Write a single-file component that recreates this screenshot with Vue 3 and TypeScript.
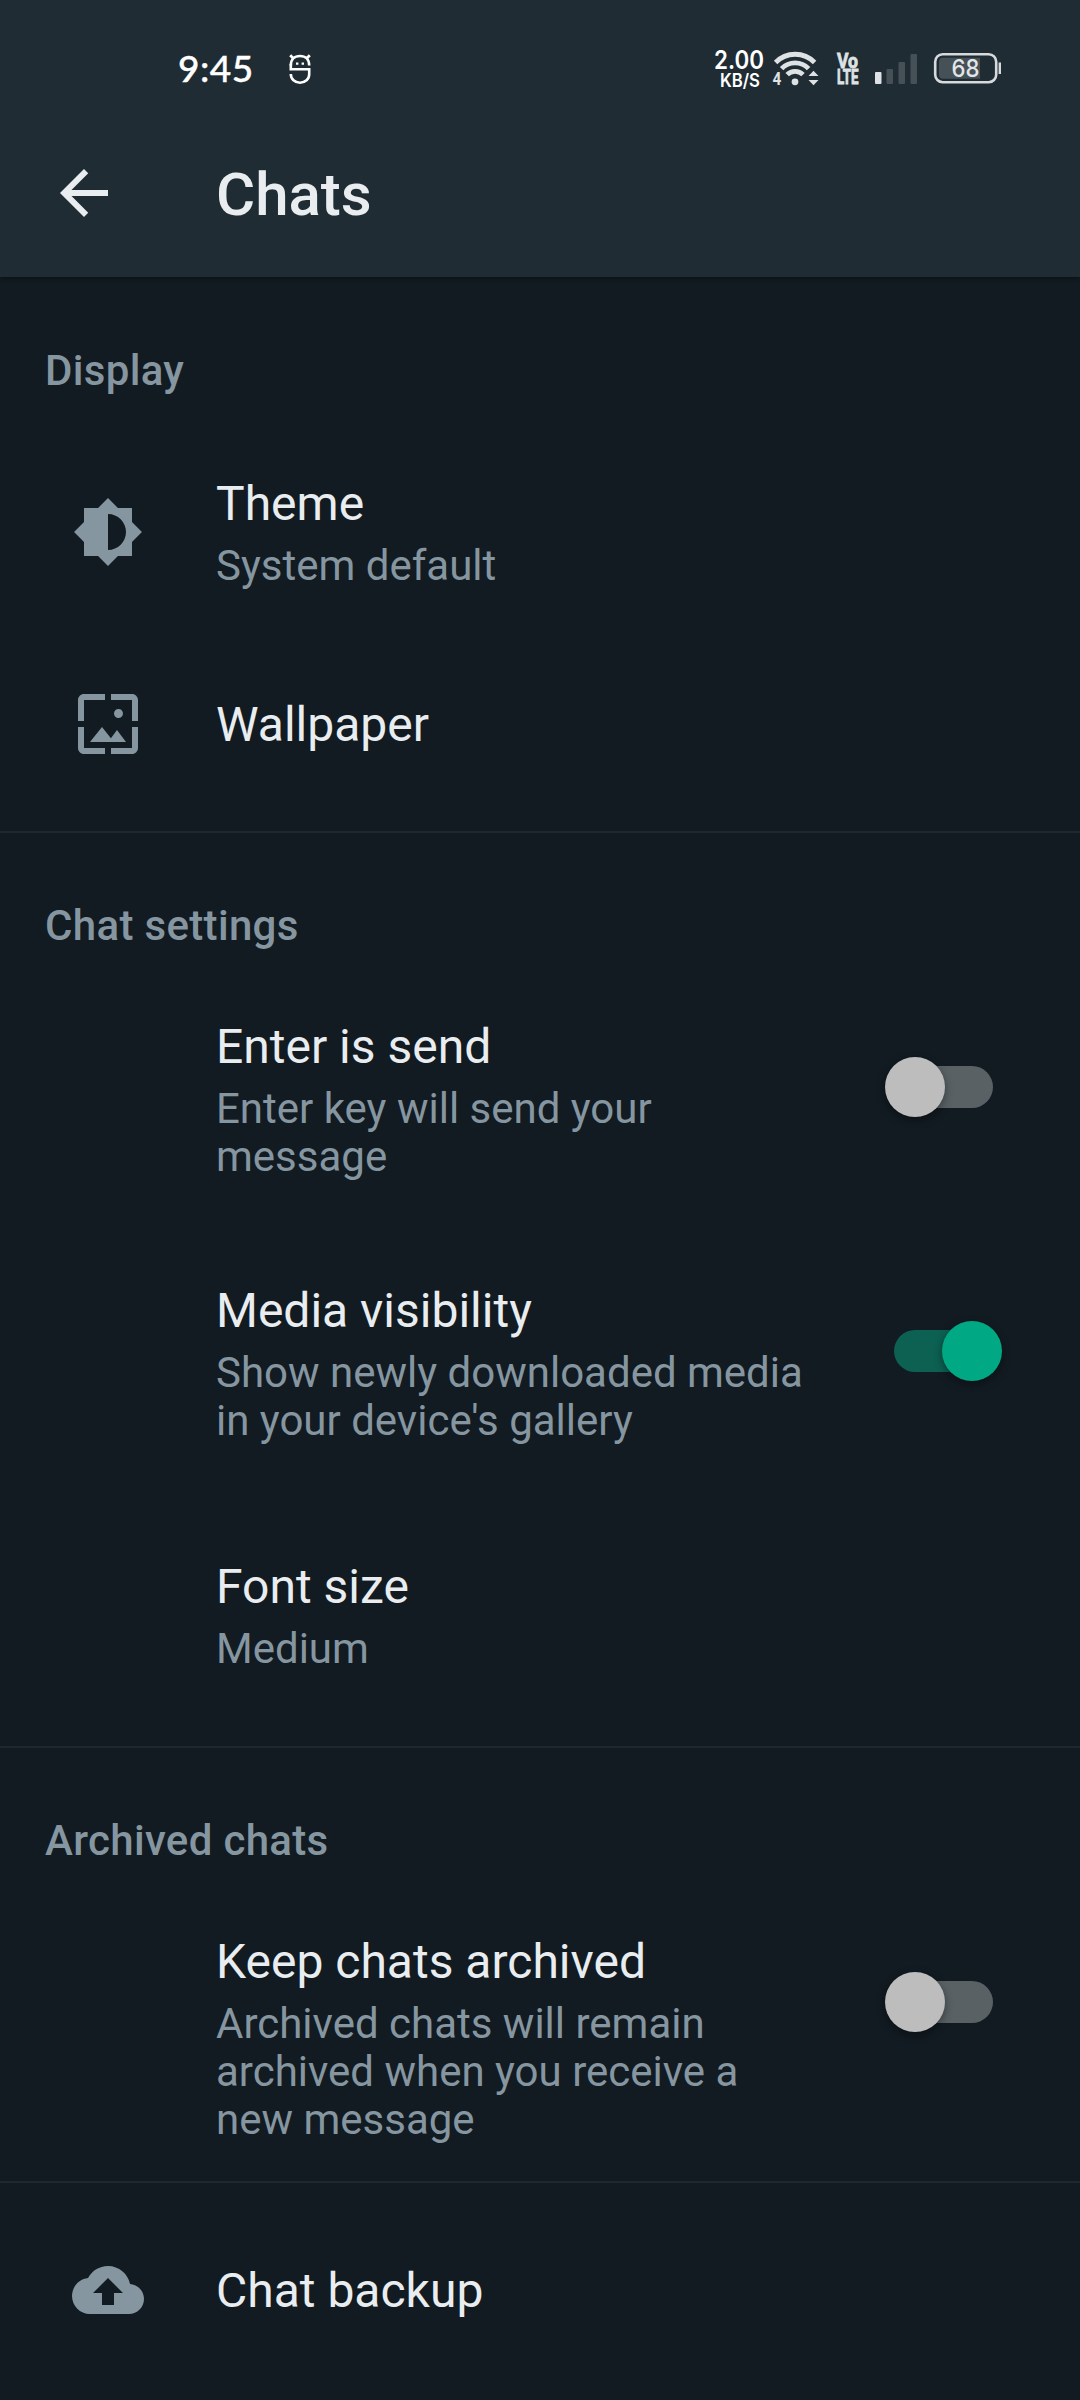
<script setup lang="ts">
interface Item {
  title: string
  subtitle?: string
  icon?: string
  toggle?: boolean
  height: number
}
interface Section {
  heading?: string
  items: Item[]
  bottom: number
}

const icons: Record<string, string> = {
  theme:
    'M20 15.31L23.31 12 20 8.69V4h-4.69L12 .69 8.69 4H4v4.69L.69 12 4 15.31V20h4.69L12 23.31 15.31 20H20v-4.69zM12 18V6c3.31 0 6 2.69 6 6s-2.69 6-6 6z',
  wallpaper:
    'M4 4h7V2H4c-1.1 0-2 .9-2 2v7h2V4zm6 9l-4 5h12l-3-4-2.03 2.71L10 13zm7-4.5c0-.83-.67-1.5-1.5-1.5S14 7.67 14 8.5s.67 1.5 1.5 1.5S17 9.33 17 8.5zM20 2h-7v2h7v7h2V4c0-1.1-.9-2-2-2zm0 18h-7v2h7c1.1 0 2-.9 2-2v-7h-2v7zM4 13H2v7c0 1.1.9 2 2 2h7v-2H4v-7z',
  backup:
    'M19.35 10.04C18.67 6.59 15.64 4 12 4 9.11 4 6.6 5.64 5.35 8.04 2.34 8.36 0 10.91 0 14c0 3.31 2.69 6 6 6h13c2.76 0 5-2.24 5-5 0-2.64-2.05-4.78-4.65-4.96zM14 13v4h-4v-4H7l5-5 5 5h-3z',
}

const sections: Section[] = [
  {
    heading: 'Display',
    items: [
      { title: 'Theme', subtitle: 'System default', icon: 'theme', height: 216 },
      { title: 'Wallpaper', icon: 'wallpaper', height: 168 },
    ],
    bottom: 22,
  },
  {
    heading: 'Chat settings',
    items: [
      { title: 'Enter is send', subtitle: 'Enter key will send your message', toggle: false, height: 264 },
      { title: 'Media visibility', subtitle: "Show newly downloaded media in your device's gallery", toggle: true, height: 265 },
      { title: 'Font size', subtitle: 'Medium', height: 216 },
    ],
    bottom: 22,
  },
  {
    heading: 'Archived chats',
    items: [
      {
        title: 'Keep chats archived',
        subtitle: 'Archived chats will remain archived when you receive a new message',
        toggle: false,
        height: 287,
      },
    ],
    bottom: 0,
  },
  { items: [{ title: 'Chat backup', icon: 'backup', height: 216 }], bottom: 0 },
]
</script>

<template>
  <div class="screen">
    <header class="top">
      <div class="status">
        <span class="clock">9:45</span>
        <svg class="mascot" width="24" height="32" viewBox="0 0 24 32" fill="none" stroke="#fff" stroke-width="2.6">
          <path d="M2.8 12.5C2.8 6.5 6.5 3 12 3s9.2 3.5 9.2 9.5" />
          <path d="M2.2 2.2l3.3 3.4M21.8 2.2l-3.3 3.4" stroke-width="2.8" />
          <path d="M2.8 11v5.2h18.4v5c0 5-4 8.5-9.2 8.5s-9.2-3.5-9.2-8.7" />
          <path d="M8 10.6h2.4M13.6 10.6H16" stroke-width="2.4" />
        </svg>
        <div class="cluster">
          <svg width="56" height="42" viewBox="0 0 56 42" fill="#fff">
            <text class="speed" x="3" y="21" font-size="25" textLength="50" lengthAdjust="spacingAndGlyphs">2.00</text>
            <text class="speed" x="9" y="38.5" font-size="18.5" textLength="40" lengthAdjust="spacingAndGlyphs">KB/S</text>
          </svg>
          <svg class="wifi" width="52" height="42" viewBox="0 0 52 42" fill="#dfe2e4">
            <g fill="none" stroke="#dfe2e4" stroke-width="4.8">
              <path d="M6.6 14.5a27.2 27.2 0 0 1 39 0" />
              <path d="M12.6 20.7a18.6 18.6 0 0 1 27 0" />
              <path d="M18.2 26.7a11 11 0 0 1 15.8 0" />
            </g>
            <circle cx="26" cy="33.8" r="3.4" />
            <text class="label" x="3.4" y="36.5" font-size="18" textLength="8.8" lengthAdjust="spacingAndGlyphs">4</text>
            <path d="M39.5 28l5-5.2 5 5.2zM39.5 32l5 5.2 5-5.2z" />
          </svg>
          <svg class="volte" width="24" height="42" viewBox="0 0 24 42" fill="#dfe2e4" stroke="#dfe2e4" stroke-width="0.8">
            <text class="label" x="1" y="20" font-size="19.5" textLength="21" lengthAdjust="spacingAndGlyphs">Vo</text>
            <text class="label" x="1" y="36" font-size="19.5" textLength="21.5" lengthAdjust="spacingAndGlyphs">LTE</text>
          </svg>
          <svg class="signal" width="44" height="42" viewBox="0 0 44 42" fill="#465057">
            <rect x="1" y="24" width="6.5" height="12" rx="1" fill="#dfe2e4" />
            <rect x="12.5" y="21" width="6.5" height="15" rx="1" />
            <rect x="24.5" y="14" width="6.5" height="22" rx="1" />
            <rect x="36.5" y="6" width="6.5" height="30" rx="1" />
          </svg>
          <svg class="battery" width="70" height="42" viewBox="0 0 70 42">
            <rect x="2.2" y="6.2" width="61" height="28" rx="7.5" fill="none" stroke="#d6dadc" stroke-width="2.6" />
            <path d="M10 9.7h37v21H10a4 4 0 0 1-4-4v-13a4 4 0 0 1 4-4z" fill="#465057" />
            <path d="M66.8 14.5v11.5" stroke="#d6dadc" stroke-width="2.4" />
            <text class="percent" x="18.5" y="29.2" font-size="24" textLength="28" lengthAdjust="spacingAndGlyphs" fill="#e3e6e8">68</text>
          </svg>
        </div>
      </div>
      <div class="bar">
        <svg class="back" width="72" height="72" viewBox="0 0 24 24" fill="#e9edef">
          <path d="M20 11H7.83l5.59-5.59L12 4l-8 8 8 8 1.41-1.41L7.83 13H20v-2z" />
        </svg>
        <h1>Chats</h1>
      </div>
    </header>

    <main>
      <section v-for="(s, i) in sections" :key="i" :style="{ paddingBottom: s.bottom + 'px' }">
        <h2 v-if="s.heading">{{ s.heading }}</h2>
        <div
          v-for="item in s.items"
          :key="item.title"
          class="row"
          :class="{ toggled: item.toggle !== undefined }"
          :style="{ height: item.height + 'px' }"
        >
          <div class="lead">
            <svg v-if="item.icon" width="72" height="72" viewBox="0 0 24 24" fill="#8696a0">
              <path :d="icons[item.icon]" />
            </svg>
          </div>
          <div class="text">
            <div class="title">{{ item.title }}</div>
            <div v-if="item.subtitle" class="subtitle">{{ item.subtitle }}</div>
          </div>
          <div v-if="item.toggle !== undefined" class="switch" :class="{ on: item.toggle }">
            <span class="thumb"></span>
          </div>
        </div>
      </section>
    </main>
  </div>
</template>

<style>
body {
  background: #121b22;
}
</style>

<style scoped>
.screen {
  width: 1080px;
  height: 2400px;
  overflow: hidden;
  background: #121b22;
  font-family: Roboto, sans-serif;
  color: #e9edef;
}
.top {
  position: relative;
  height: 277px;
  background: #1f2c34;
  box-shadow: 0 1px 4px rgba(0, 0, 0, 0.45);
}
.status {
  display: flex;
  height: 137px;
  padding: 0 77px 0 178px;
}
.clock {
  width: 110px;
  padding-top: 46px;
  font: 500 37px/44px Lato, sans-serif;
  letter-spacing: 0.5px;
  color: #fff;
  -webkit-text-stroke: 0.4px #fff;
}
.mascot {
  margin-top: 53px;
}
.cluster {
  display: flex;
  margin: 48px 0 0 auto;
}
.cluster svg {
  overflow: visible;
}
.wifi {
  margin-left: 1.5px;
}
.volte {
  margin-left: 15.5px;
}
.signal {
  margin-left: 14px;
}
.battery {
  margin-left: 15px;
}
.speed {
  font-family: Inter, sans-serif;
  font-weight: 600;
}
.label {
  font-family: Roboto, sans-serif;
  font-weight: 700;
}
.percent {
  font-family: Inter, sans-serif;
  font-weight: 500;
}
.bar {
  display: flex;
  align-items: center;
  height: 112px;
  padding-left: 48px;
}
.back {
  margin-right: 96px;
}
h1 {
  margin: 3px 0 0;
  font-size: 60px;
  font-weight: 500;
  line-height: 72px;
}
section + section {
  border-top: 2px solid #1f282e;
}
h2 {
  margin: 0;
  padding: 69px 45px 29px;
  font-size: 42px;
  font-weight: 500;
  line-height: 48px;
  letter-spacing: 0.33px;
  color: #8696a0;
}
section:first-child h2 {
  padding-top: 70px;
  padding-bottom: 30px;
}
.row {
  display: flex;
  align-items: center;
}
.lead {
  display: flex;
  width: 144px;
  padding: 0 0 2px 72px;
}
.text {
  width: 600px;
}
.title {
  font-size: 48px;
  line-height: 56px;
}
.subtitle {
  margin-top: 10px;
  font-size: 42px;
  line-height: 48px;
  color: #8696a0;
}
.toggled {
  align-items: flex-start;
}
.toggled .text {
  margin-top: 40px;
}
.switch {
  display: flex;
  align-items: center;
  width: 99px;
  height: 42px;
  margin: 87px 0 0 78px;
  border-radius: 21px;
  background: #596165;
}
.thumb {
  width: 60px;
  height: 60px;
  flex: none;
  margin-left: -9px;
  border-radius: 50%;
  background: #bdbdbd;
  box-shadow: 0 3px 9px rgba(0, 0, 0, 0.4);
}
.switch.on {
  background: #0c6153;
}
.on .thumb {
  margin-left: 48px;
  background: #00a884;
}
</style>
